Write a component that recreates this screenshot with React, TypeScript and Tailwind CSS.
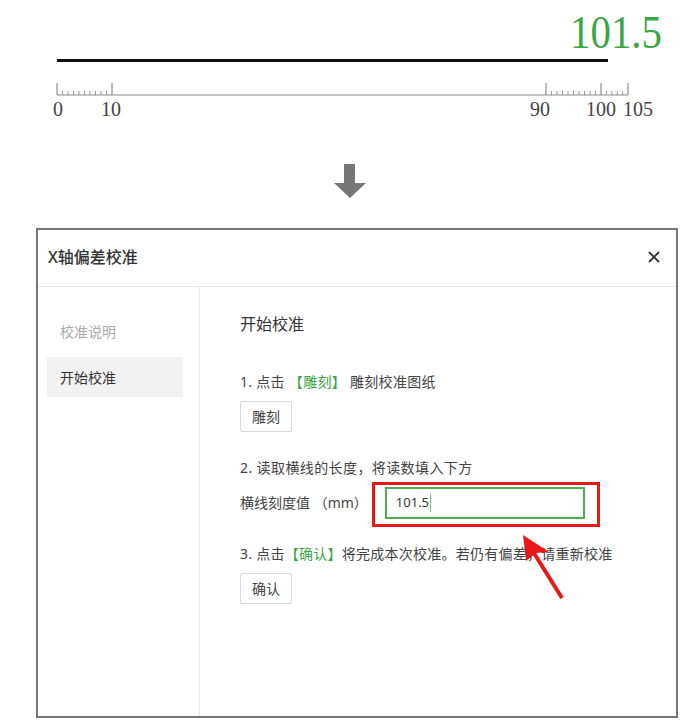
import React from 'react';

const FONT = '"Noto Sans", "Noto Sans CJK SC", sans-serif';

// ruler drawing with the measured line above it
const Ruler: React.FC = () => {
  const minor = (from: number, count: number, step: number) =>
    Array.from({ length: count }, (_, i) => from + step * (i + 1));
  const minors = [...minor(57, 9, 5.5), ...minor(546, 9, 5.5), ...minor(601, 4, 5.4)];
  const majors = [57, 112, 546, 601, 628];
  const labels: Array<[string, number]> = [['0', 58], ['10', 111], ['90', 540], ['100', 601], ['105', 638]];

  return (
    <svg width="697" height="150" className="block">
      <text
        x="570"
        y="48"
        fontFamily='"Liberation Serif", serif'
        fontSize="46"
        fill="#3aa646"
        textLength="92"
        lengthAdjust="spacingAndGlyphs"
      >
        101.5
      </text>
      <line x1="57" y1="60.5" x2="608" y2="60.5" stroke="#111" strokeWidth="3" />
      <line x1="57" y1="95" x2="628" y2="95" stroke="#8a8a8a" strokeWidth="1.2" />
      {majors.map((x) => (
        <line key={x} x1={x} y1="83" x2={x} y2="95" stroke="#777" strokeWidth="1" />
      ))}
      {minors.map((x) => (
        <line key={x} x1={x} y1="91" x2={x} y2="95" stroke="#999" strokeWidth="1" />
      ))}
      {labels.map(([t, x]) => (
        <text
          key={t}
          x={x}
          y="116"
          textAnchor="middle"
          fontFamily='"Liberation Serif", serif'
          fontSize="20"
          fill="#444"
        >
          {t}
        </text>
      ))}
    </svg>
  );
};

const DownArrow: React.FC = () => (
  <svg width="32" height="34" className="block">
    <path d="M10 0 H21 V19 H32 L16 34 L0 19 H10 Z" fill="#777" />
  </svg>
);

const SmallButton: React.FC<{ label: string }> = ({ label }) => (
  <button className="h-[31px] w-[52px] border border-[#d9d9d9] rounded-[2px] bg-white text-[14px] text-[#444] flex items-center justify-center">
    {label}
  </button>
);

export default function App() {
  return (
    <div className="relative w-[697px] h-[728px] bg-white overflow-hidden" style={{ fontFamily: FONT }}>
      <Ruler />

      <div className="ml-[334px] mt-[14px]">
        <DownArrow />
      </div>

      {/* Dialog */}
      <div className="ml-[36px] mt-[30px] w-[642px] h-[490px] border-2 border-[#767676] flex flex-col">
        <div className="h-[57px] shrink-0 border-b border-[#e8e8e8] flex items-center justify-between pl-[10px] pr-[16px] pb-[2px]">
          <h3 className="text-[16px] font-medium text-[#333]">X轴偏差校准</h3>
          <svg width="12" height="12" viewBox="0 0 12 12" className="block">
            <path d="M1 1 L11 11 M11 1 L1 11" stroke="#333" strokeWidth="1.8" />
          </svg>
        </div>

        <div className="flex flex-1">
          {/* Sidebar */}
          <div className="w-[162px] shrink-0 border-r border-[#e8e8e8] pt-[24px] pl-[9px] pr-[16px] flex flex-col gap-[6px]">
            <div className="h-[40px] flex items-center pl-[13px] text-[14px] text-[#aaa]">校准说明</div>
            <div className="h-[40px] flex items-center pl-[13px] text-[14px] text-[#333] bg-[#f2f2f2]">开始校准</div>
          </div>

          {/* Content */}
          <div className="flex-1 pl-[40px] pt-[25px] text-[#444]">
            <div className="text-[16px] leading-[24px] text-[#333]">开始校准</div>

            <div className="mt-[36px] text-[14px] leading-[20px] tracking-[0.3px]">
              1. 点击 <span className="text-[#3aa646]">【雕刻】</span> 雕刻校准图纸
            </div>
            <div className="mt-[9px]">
              <SmallButton label="雕刻" />
            </div>

            <div className="mt-[26px] text-[14px] leading-[20px] tracking-[0.4px]">
              2. 读取横线的长度，将读数填入下方
            </div>
            <div className="mt-[9px] flex items-center gap-[17px]">
              <span className="text-[14px] leading-[20px]">横线刻度值 （mm）</span>
              <div className="relative">
                <div className="w-[200px] h-[32px] border-2 border-[#4cae4f] flex items-center pl-[9px] text-[13px] text-[#333]">
                  101.5
                  <span className="ml-[1px] h-[18px] border-l border-[#7cc47e]" />
                </div>
                {/* annotation box */}
                <div className="absolute left-[-13px] top-[-5px] w-[228px] h-[45px] border-[3px] border-[#e8171a]" />
              </div>
            </div>

            <div className="mt-[25px] text-[14px] leading-[20px] tracking-[0.25px]">
              3. 点击<span className="text-[#3aa646]">【确认】</span>将完成本次校准。若仍有偏差，请重新校准
            </div>
            <div className="mt-[9px]">
              <SmallButton label="确认" />
            </div>
          </div>
        </div>
      </div>

      {/* red pointer arrow */}
      <svg width="697" height="728" className="absolute left-0 top-0 pointer-events-none">
        <line x1="562" y1="598" x2="532" y2="550" stroke="#e8171a" strokeWidth="4" />
        <path d="M523 535 L549 552 L536 553 L526 561 Z" fill="#e8171a" />
      </svg>
    </div>
  );
}
